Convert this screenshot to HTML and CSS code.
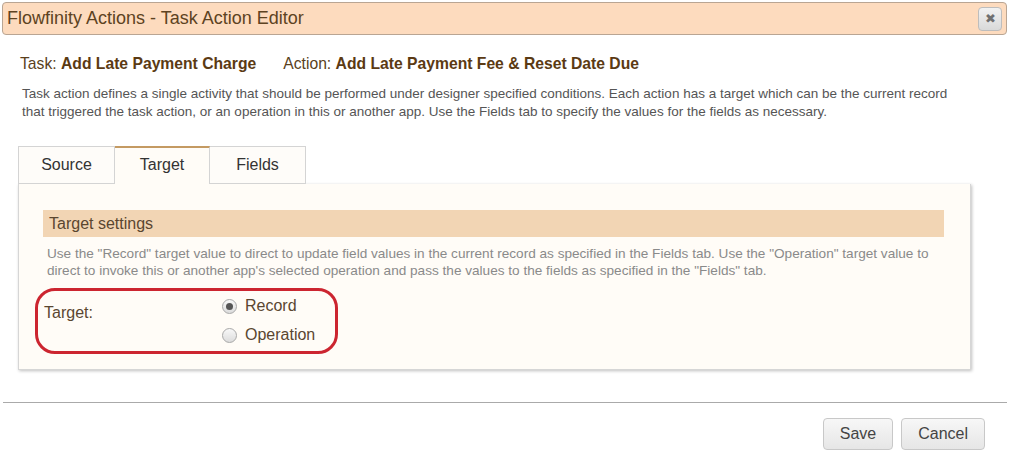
FILE: index.html
```html
<!DOCTYPE html>
<html lang="en">
<head>
    <meta charset="UTF-8">
    <title>Task Action Editor</title>
    <link rel="stylesheet" href="styles.css">
</head>
<body>
    <div class="dialog">
        <div class="titlebar">
            <span class="title">Flowfinity Actions - Task Action Editor</span>
            <span class="close">&#10006;</span>
        </div>

        <div class="content">
            <div class="heading">
                <span>Task: <b>Add Late Payment Charge</b></span>
                <span class="action">Action: <b>Add Late Payment Fee &amp; Reset Date Due</b></span>
            </div>
            <p class="intro">Task action defines a single activity that should be performed under designer specified conditions. Each action has a target which can be the current record that triggered the task action, or an operation in this or another app. Use the Fields tab to specify the values for the fields as necessary.</p>

            <div class="tabs">
                <div class="tab">Source</div>
                <div class="tab selected">Target</div>
                <div class="tab">Fields</div>
            </div>
            <div class="panel">
                <div class="section">Target settings</div>
                <p class="hint">Use the "Record" target value to direct to update field values in the current record as specified in the Fields tab. Use the "Operation" target value to direct to invoke this or another app's selected operation and pass the values to the fields as specified in the "Fields" tab.</p>
                <div class="target-row">
                    <div class="label">Target:</div>
                    <div class="options">
                        <label class="option"><span class="radio on"></span>Record</label>
                        <label class="option"><span class="radio"></span>Operation</label>
                    </div>
                </div>
            </div>
        </div>

        <div class="footer">
            <button class="btn">Save</button>
            <button class="btn">Cancel</button>
        </div>
    </div>
</body>
</html>
```

FILE: styles.css
```css
* {margin: 0;padding: 0;box-sizing: border-box;}

body{
    font-family: "Liberation Sans", Arial, sans-serif;
    background-color: #fff;
    width: 1011px;
    height: 455px;
    overflow: hidden;
}

.dialog{
    padding: 2px 4px 0 2px;
}

.titlebar{
    height: 33px;
    display: flex;
    align-items: center;
    justify-content: space-between;
    padding: 0 4px 0 4px;
    background-color: #fddbbe;
    border: 1px solid #b9a593;
    border-radius: 4px;
}
.title{
    font-size: 18px;
    color: #5d4322;
}
.close{
    width: 24px;
    height: 24px;
    display: flex;
    align-items: center;
    justify-content: center;
    font-size: 13px;
    color: #707070;
    background: linear-gradient(#f2f2f2, #d9d9d9);
    border: 1px solid #bdbdbd;
    border-radius: 4px;
}

.content{
    padding: 20px 0 0 16px;
}

.heading{
    font-size: 15.7px;
    color: #5a3f1c;
    height: 18px;
    display: flex;
    gap: 27px;
    padding-left: 2px;
}
.heading b{
    color: #5b3a13;
}
.intro{
    margin: 12px 0 0 4px;
    width: 940px;
    font-size: 13.5px;
    line-height: 18px;
    color: #555;
}

.tabs{
    margin-top: 25px;
    display: flex;
    height: 38px;
}
.tab{
    width: 96px;
    height: 38px;
    padding-top: 9px;
    text-align: center;
    font-size: 16px;
    color: #333;
    background-color: #fefcf9;
    border: 1px solid #d4d4d4;
    border-left: none;
}
.tab:first-child{
    width: 97px;
    border-left: 1px solid #d4d4d4;
}
.tab.selected{
    width: 95px;
    border-top: 2px solid #c49a62;
    border-bottom: none;
    background-color: #fffcf7;
    padding-top: 8px;
}

.panel{
    width: 953px;
    height: 186px;
    background-color: #fffcf7;
    border: 1px solid #d6d6d6;
    border-top: none;
    box-shadow: 1px 1px 3px rgba(0,0,0,0.25);
    padding: 26px 26px 0 24px;
}
.section{
    height: 27px;
    padding: 5px 0 0 6px;
    font-size: 16px;
    color: #5a4630;
    background-color: #f2d5b4;
}
.hint{
    margin: 8px 0 0 4px;
    font-size: 13.6px;
    line-height: 17px;
    color: #8a8a8a;
}

.target-row{
    margin: 9px 0 0 -8px;
    width: 303px;
    height: 66px;
    border: 3px solid #cc2530;
    border-radius: 20px;
    display: flex;
    padding: 6px 0 0 6px;
}
.label{
    width: 178px;
    padding-top: 7px;
    font-size: 16px;
    color: #5a4630;
}
.options{
    display: flex;
    flex-direction: column;
    gap: 11px;
}
.option{
    display: flex;
    align-items: center;
    gap: 8px;
    font-size: 16px;
    color: #5a4630;
    height: 18px;
}
.radio{
    width: 15px;
    height: 15px;
    border-radius: 50%;
    border: 1px solid #a8a8a8;
    background: linear-gradient(#f8f8f8, #dcdcdc);
    display: flex;
    align-items: center;
    justify-content: center;
}
.radio.on::after{
    content: "";
    width: 7px;
    height: 7px;
    border-radius: 50%;
    background-color: #555;
}

.footer{
    margin-top: 32px;
    margin-left: 1px;
    border-top: 1px solid #aaa;
    height: 50px;
    display: flex;
    justify-content: flex-end;
    gap: 8px;
    padding: 15px 22px 0 0;
}
.btn{
    height: 32px;
    padding: 0 16px;
    font-family: "Liberation Sans", Arial, sans-serif;
    font-size: 16px;
    color: #444;
    background: linear-gradient(#f7f7f7, #e6e6e6);
    border: 1px solid #c8c8c8;
    border-radius: 4px;
}
```
